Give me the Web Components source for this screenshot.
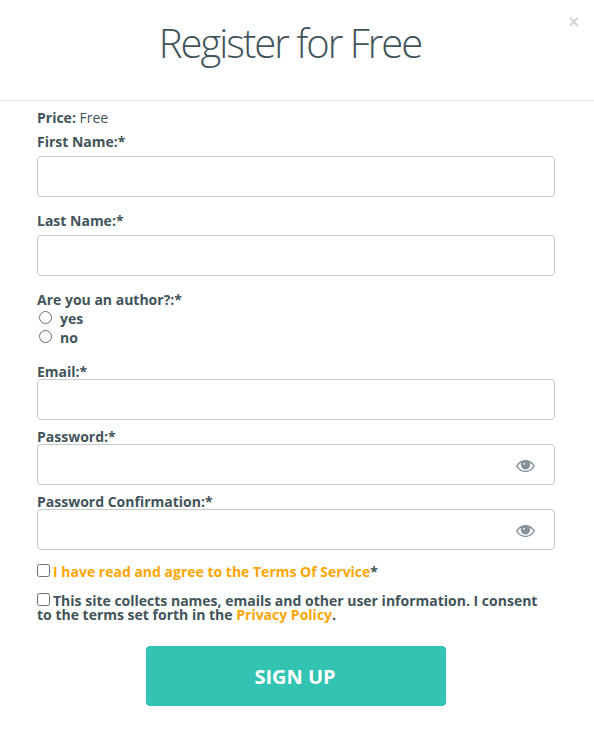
<!DOCTYPE html>
<html>
<head>
<meta charset="utf-8">
<title>Register for Free</title>
<style>
    html, body { margin: 0; background: #fff; }
    body { font-family: "Open Sans", sans-serif; color: #41545a; }
</style>
</head>
<body>
<register-modal heading="Register for Free">
    <price-line>Free</price-line>
    <text-field label="First Name:*" gap="7" after="14"></text-field>
    <text-field label="Last Name:*" gap="7" after="14"></text-field>
    <radio-group label="Are you an author?:*">
        <radio-option>yes</radio-option>
        <radio-option>no</radio-option>
    </radio-group>
    <text-field label="Email:*" gap="0" after="7"></text-field>
    <text-field label="Password:*" gap="0" after="7" eye></text-field>
    <text-field label="Password Confirmation:*" gap="0" after="15" eye></text-field>
    <check-line after="15"><a-link>I have read and agree to the Terms Of Service</a-link>*</check-line>
    <check-line>This site collects names, emails and other user information. I consent to the terms set forth in the <a-link>Privacy Policy</a-link>.</check-line>
    <sign-button>SIGN UP</sign-button>
</register-modal>

<script>
const modalTemplate = document.createElement('template');
modalTemplate.innerHTML = `
    <style>
        :host { display: block; width: 594px; height: 741px; position: relative; overflow: hidden; }
        header {
            height: 100px;
            box-sizing: content-box;
            border-bottom: 1px solid #e5e5e5;
            display: flex;
            justify-content: center;
            padding-right: 14px;
        }
        h1 {
            margin: 15px 0 0;
            font-size: 40px;
            line-height: 56px;
            font-weight: 300;
            letter-spacing: -2px;
            color: #41545a;
        }
        .close {
            position: absolute;
            top: 13px;
            right: 15px;
            font-size: 18px;
            line-height: 18px;
            font-weight: 700;
            color: #d4d4d4;
            font-family: "Liberation Sans", sans-serif;
        }
        .body { padding: 7px 39px 0 37px; }
    </style>
    <header><h1></h1></header>
    <span class="close">×</span>
    <div class="body"><slot></slot></div>
`;
class RegisterModal extends HTMLElement {
    constructor () {
        super();
        this._shadowRoot = this.attachShadow({ mode: 'open' });
        this._shadowRoot.appendChild(modalTemplate.content.cloneNode(true));
        this._shadowRoot.querySelector('h1').textContent = this.getAttribute('heading');
    }
}
customElements.define('register-modal', RegisterModal);

const priceTemplate = document.createElement('template');
priceTemplate.innerHTML = `
    <style>
        :host { display: block; font-size: 14px; line-height: 20px; height: 24px; color: #41545a; }
        b { font-weight: 700; }
    </style>
    <b>Price:</b> <slot></slot>
`;
class PriceLine extends HTMLElement {
    constructor () {
        super();
        this.attachShadow({ mode: 'open' }).appendChild(priceTemplate.content.cloneNode(true));
    }
}
customElements.define('price-line', PriceLine);

const fieldTemplate = document.createElement('template');
fieldTemplate.innerHTML = `
    <style>
        :host { display: block; }
        label { display: block; font-size: 14px; line-height: 20px; font-weight: 700; color: #41545a; }
        .box {
            height: 41px;
            box-sizing: border-box;
            border: 1px solid #c8c8c8;
            border-radius: 4px;
            background: #fff;
            display: flex;
            align-items: center;
            justify-content: flex-end;
            padding-right: 19px;
        }
        svg { display: none; width: 19px; height: 12px; margin-top: 2px; }
        :host([eye]) svg { display: block; }
    </style>
    <label></label>
    <div class="box">
        <svg viewBox="0 0 19 12"><path fill="#83939d" fill-rule="evenodd" d="M9.5 0C5.4 0 2 2.300 0 6 2 9.700 5.400 12 9.500 12S17 9.700 19 6C17 2.300 13.600 0 9.500 0ZM5.400 2.400C3.800 3.300 2.500 4.500 1.600 6 2.900 8.300 5.800 10.800 9.500 10.800S16.100 8.300 17.400 6C16.500 4.500 15.200 3.300 13.600 2.400 14.300 3.400 14.300 4.600 14 5.500 13.400 8 11.700 9.500 9.500 9.500S5.600 8 5 5.500C4.700 4.600 4.700 3.400 5.400 2.400Z"/><circle cx="9.500" cy="5.200" r="3.800" fill="#83939d"/><circle cx="7.900" cy="3.700" r="1" fill="#e3e7ea"/></svg>
    </div>
`;
class TextField extends HTMLElement {
    constructor () {
        super();
        this._shadowRoot = this.attachShadow({ mode: 'open' });
        this._shadowRoot.appendChild(fieldTemplate.content.cloneNode(true));
        this._shadowRoot.querySelector('label').textContent = this.getAttribute('label');
        this._shadowRoot.querySelector('.box').style.marginTop = (this.getAttribute('gap') - 3) + 'px';
        this.style.marginBottom = this.getAttribute('after') + 'px';
    }
}
customElements.define('text-field', TextField);

const radioGroupTemplate = document.createElement('template');
radioGroupTemplate.innerHTML = `
    <style>
        :host { display: block; height: 72px; }
        .title { font-size: 14px; line-height: 19px; font-weight: 700; color: #41545a; }
    </style>
    <div class="title"></div>
    <slot></slot>
`;
class RadioGroup extends HTMLElement {
    constructor () {
        super();
        this._shadowRoot = this.attachShadow({ mode: 'open' });
        this._shadowRoot.appendChild(radioGroupTemplate.content.cloneNode(true));
        this._shadowRoot.querySelector('.title').textContent = this.getAttribute('label');
    }
}
customElements.define('radio-group', RadioGroup);

const radioTemplate = document.createElement('template');
radioTemplate.innerHTML = `
    <style>
        :host { display: flex; align-items: center; height: 19px; padding-left: 2px; font-size: 14px; font-weight: 700; color: #41545a; }
        i {
            width: 13px;
            height: 13px;
            box-sizing: border-box;
            border: 1px solid #6f6f6f;
            border-radius: 50%;
            margin: -2px 8px 0 0;
            background: #fff;
        }
    </style>
    <i></i><span><slot></slot></span>
`;
class RadioOption extends HTMLElement {
    constructor () {
        super();
        this.attachShadow({ mode: 'open' }).appendChild(radioTemplate.content.cloneNode(true));
    }
}
customElements.define('radio-option', RadioOption);

const checkTemplate = document.createElement('template');
checkTemplate.innerHTML = `<style>
        :host { display: block; font-size: 14px; line-height: 14px; font-weight: 700; color: #41545a; }
        i {
            display: inline-block;
            vertical-align: 0;
            width: 13px;
            height: 13px;
            margin-top: -1px;
            box-sizing: border-box;
            border: 1px solid #6f6f6f;
            border-radius: 2.5px;
            margin-right: 3px;
            background: #fff;
        }
    </style><i></i><slot></slot>`;
class CheckLine extends HTMLElement {
    constructor () {
        super();
        this.attachShadow({ mode: 'open' }).appendChild(checkTemplate.content.cloneNode(true));
        if (this.getAttribute('after')) {
            this.style.marginBottom = this.getAttribute('after') + 'px';
        }
    }
}
customElements.define('check-line', CheckLine);

const linkTemplate = document.createElement('template');
linkTemplate.innerHTML = `<style>
        :host { display: inline; color: #ffa500; font-weight: 700; cursor: pointer; }
    </style><slot></slot>`;
class ALink extends HTMLElement {
    constructor () {
        super();
        this.attachShadow({ mode: 'open' }).appendChild(linkTemplate.content.cloneNode(true));
    }
}
customElements.define('a-link', ALink);

const buttonTemplate = document.createElement('template');
buttonTemplate.innerHTML = `
    <style>
        :host { display: flex; justify-content: center; margin-top: 24px; }
        div {
            width: 300px;
            height: 60px;
            padding-right: 2px;
            box-sizing: border-box;
            background: #33c3b3;
            border-radius: 4px;
            color: #fff;
            font-size: 20px;
            font-weight: 700;
            display: flex;
            align-items: center;
            justify-content: center;
            cursor: pointer;
        }
    </style>
    <div><slot></slot></div>
`;
class SignButton extends HTMLElement {
    constructor () {
        super();
        this.attachShadow({ mode: 'open' }).appendChild(buttonTemplate.content.cloneNode(true));
    }
}
customElements.define('sign-button', SignButton);
</script>
</body>
</html>
